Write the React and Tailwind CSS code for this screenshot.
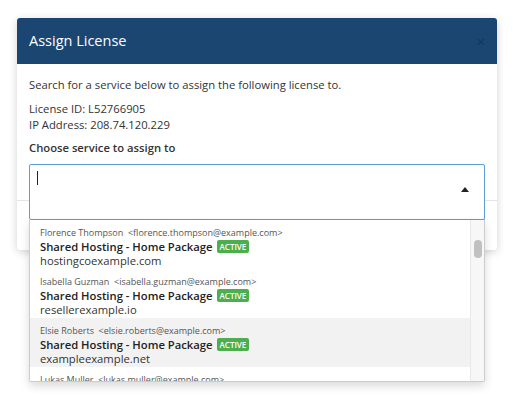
import React from "react";

const services = [
  {
    name: "Florence Thompson",
    email: "florence.thompson@example.com",
    domain: "hostingcoexample.com",
  },
  {
    name: "Isabella Guzman",
    email: "isabella.guzman@example.com",
    domain: "resellerexample.io",
  },
  {
    name: "Elsie Roberts",
    email: "elsie.roberts@example.com",
    domain: "exampleexample.net",
    highlighted: true,
  },
  {
    name: "Lukas Muller",
    email: "lukas.muller@example.com",
    domain: "lukasexample.com",
  },
];

const ServiceItem = ({ item }) => (
  <div
    className={`px-[10px] pt-[6px] h-[49px] ${
      item.highlighted ? "bg-[#f2f2f2]" : "bg-white"
    }`}
  >
    <div className="text-[9px] leading-[13px] text-[#555] whitespace-nowrap">
      {item.name}&nbsp;&nbsp;&lt;{item.email}&gt;
    </div>
    <div className="flex items-center gap-[4px] h-[15px]">
      <span className="text-[11.25px] font-semibold text-[#222] leading-[15px]">
        Shared Hosting - Home Package
      </span>
      <span className="bg-[#4cae4c] text-white text-[8px] font-semibold leading-[13px] px-[3px] rounded-[2px]">
        ACTIVE
      </span>
    </div>
    <div className="text-[11.25px] leading-[14px] text-[#333]">{item.domain}</div>
  </div>
);

const App = () => {
  return (
    <div className="min-h-[411px] bg-white font-['Open_Sans',sans-serif] pt-[18px] pl-[17px]">
      <div className="w-[480px] rounded-[3px] shadow-[0_2px_8px_rgba(0,0,0,0.18)] bg-white">
        <div className="h-[46px] bg-[#1b4672] rounded-t-[3px] flex items-center justify-between pl-[12px] pr-[12px]">
          <h1 className="text-white text-[14.5px] leading-none">Assign License</h1>
          <span className="text-[#0f2c4a] text-[15px] leading-none opacity-60">×</span>
        </div>
        <div className="px-[12px] pt-[12px] text-[11.25px] text-[#333]">
          <p className="leading-[18px]">
            Search for a service below to assign the following license to.
          </p>
          <p className="leading-[16px] mt-[7px]">License ID: L52766905</p>
          <p className="leading-[16px]">IP Address: 208.74.120.229</p>
          <p className="font-semibold leading-[18px] mt-[6px]">
            Choose service to assign to
          </p>
          <div className="relative mt-[7px] h-[36px] z-10">
            <div className="h-[56px] border border-[#5b9dd9] rounded-[2px] bg-white relative">
              <span className="absolute left-[7px] top-[6px] w-px h-[14px] bg-[#222]"></span>
              <span className="absolute right-[15px] top-[22px] w-0 h-0 border-l-[4px] border-r-[4px] border-b-[5px] border-l-transparent border-r-transparent border-b-[#222]"></span>
            </div>
            <div className="absolute left-0 top-[56px] w-[456px] h-[162px] bg-white border border-[#ccc] border-t-0 shadow-[0_4px_10px_rgba(0,0,0,0.15)] rounded-b-[2px] overflow-hidden flex">
              <div className="flex-1 overflow-hidden">
                {services.map((s) => (
                  <ServiceItem key={s.name} item={s} />
                ))}
              </div>
              <div className="w-[14px] bg-[#f7f7f7] border-l border-[#e8e8e8] pt-[20px] flex justify-center">
                <div className="w-[8px] h-[18px] bg-[#c1c1c1] rounded-full"></div>
              </div>
            </div>
          </div>
        </div>
        <div className="h-[50px] border-t border-[#e5e5e5] flex justify-end items-start gap-[6px] pr-[12px] pt-[18px]">
          <div className="w-[48px] h-[26px] border border-[#ccc] rounded-[2px]"></div>
          <div className="w-[48px] h-[26px] border border-[#ccc] rounded-[2px]"></div>
          <div className="w-[56px] h-[26px] bg-[#1e6db5] rounded-[2px]"></div>
        </div>
      </div>
    </div>
  );
};

export default App;
